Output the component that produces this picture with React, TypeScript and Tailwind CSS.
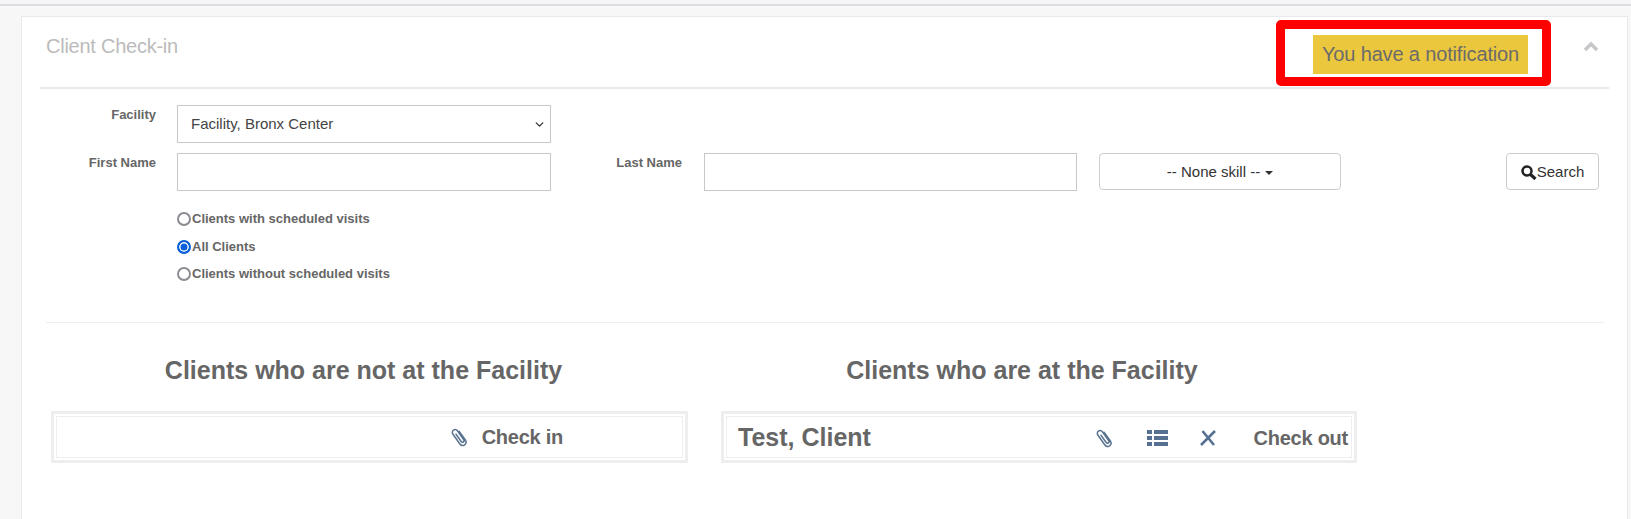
import { ChevronDown } from 'lucide-react';

const sans = 'font-["Liberation_Sans",Arial,sans-serif]';

function ClipIcon() {
    return (
        <svg width="18" height="20" viewBox="0 0 18 20" fill="none" stroke="#5a7391" strokeWidth="1.5" strokeLinecap="round" strokeLinejoin="round">
            <path d="M8.2 4.4l6 8.4c1.3 1.9.9 3.9-.6 5-1.6 1.100-3.600.7-4.900-1.100L2 7.300C.9 5.800 1.200 4 2.500 3.100c1.300-.9 3-.6 4.100.9l6 8.500c.7 1 .5 2-.2 2.500-.8.5-1.700.300-2.400-.7L5 7.300" />
        </svg>
    );
}

function ListIcon() {
    return (
        <svg width="21" height="16" viewBox="0 0 21 16" fill="#567091">
            <rect x="0" y="0" width="5" height="4" />
            <rect x="7" y="0" width="14" height="4" />
            <rect x="0" y="6" width="5" height="4" />
            <rect x="7" y="6" width="14" height="4" />
            <rect x="0" y="12" width="5" height="4" />
            <rect x="7" y="12" width="14" height="4" />
        </svg>
    );
}

function CrossIcon() {
    return (
        <svg width="18" height="16" viewBox="0 0 18 16" stroke="#567091" strokeWidth="2.6" strokeLinecap="butt">
            <path d="M2 15L16 1M3.500 1L15 15" />
        </svg>
    );
}

function SearchIcon() {
    return (
        <svg width="16" height="15" viewBox="0 0 16 15" fill="none" stroke="#222" strokeWidth="2.500">
            <circle cx="6" cy="6" r="4.500" />
            <path d="M9.500 9.500L14.500 14" strokeWidth="3.200" />
        </svg>
    );
}

function Label({ text, className }: { text: string; className: string }) {
    return <label className={`shrink-0 pt-[1px] text-right text-[13px] leading-[18px] font-bold text-[#666] ${className}`}>{text}</label>;
}

function Radio({ text, checked }: { text: string; checked?: boolean }) {
    return (
        <label className="flex h-[18px] items-center text-[13px] font-bold text-[#666]">
            <input
                type="radio"
                name="scope"
                defaultChecked={checked}
                className="m-0 mr-[1px] h-[14px] w-[14px] appearance-none rounded-full border-2 border-[#8b8b93] bg-white checked:border-[#0a5fd8] checked:bg-[#0a5fd8] checked:shadow-[inset_0_0_0_1.5px_white]"
            />
            {text}
        </label>
    );
}

function ClientBox({ children }: { children: React.ReactNode }) {
    return (
        <div className="h-[52px] border-[3px] border-[#eeeeee] p-[2px]">
            <div className="flex h-[42px] items-center border border-[#eeeeee]">{children}</div>
        </div>
    );
}

export default function App() {
    return (
        <div className={`${sans} h-[519px] w-full overflow-hidden bg-[#f7f7f7]`}>
            <div className="h-[6px] border-b-2 border-[#dcdde2] bg-[#f5f5f5]"></div>
            <div className="mt-[10px] ml-[21px] h-[520px] w-[1607px] border border-[#e6e9ed] bg-white pr-[18px] pl-[18px]">
                <div className="flex h-[72px] border-b-2 border-[#e6e9ed]">
                    <h2 className="mt-[19px] ml-[6px] text-[20px] leading-[21px] tracking-[-0.25px] text-[#bbbbbb]">Client Check-in</h2>
                    <div className="mt-[3px] ml-auto flex h-[66px] w-[275px] items-start rounded-[5px] border-[9px] border-[#ff0000] pt-[6px] pl-[28px]">
                        <span className="h-[39px] w-[215px] bg-[#ebc73d] text-center text-[20px] leading-[39px] tracking-[-0.15px] text-[#6b6b6b]">You have a notification</span>
                    </div>
                    <svg className="mt-[24px] mr-[11px] ml-[33px]" width="14" height="11" viewBox="0 0 14 11" fill="none" stroke="#c5c7cb" strokeWidth="3.500">
                        <path d="M1 9l6-6 6 6" />
                    </svg>
                </div>

                <div className="mt-[16px] flex">
                    <Label text="Facility" className="w-[116px]" />
                    <div className="relative ml-[21px] h-[38px] w-[374px]">
                        <select className="h-full w-full appearance-none border border-[#c8c8c8] bg-white pl-[13px] text-[15px] text-[#444]">
                            <option>Facility, Bronx Center</option>
                        </select>
                        <ChevronDown className="pointer-events-none absolute top-[13px] right-[5px] h-[13px] w-[13px] text-[#333]" strokeWidth={2.5} />
                    </div>
                </div>

                <div className="mt-[10px] flex">
                    <Label text="First Name" className="w-[116px]" />
                    <input className="ml-[21px] h-[38px] w-[374px] border border-[#c8c8c8] bg-white" />
                    <Label text="Last Name" className="w-[131px]" />
                    <input className="ml-[22px] h-[38px] w-[373px] border border-[#c8c8c8] bg-white" />
                    <button className="ml-[22px] h-[37px] w-[242px] rounded-[4px] border border-[#cccccc] bg-white pt-[1px] text-[15px] text-[#333]">
                        -- None skill --
                        <span className="ml-[5px] inline-block border-x-[4px] border-t-[4px] border-x-transparent border-t-[#333] align-middle"></span>
                    </button>
                    <button className="ml-[165px] flex h-[37px] w-[93px] items-center justify-center rounded-[4px] border border-[#cccccc] bg-white pt-[1px] text-[15px] text-[#333]">
                        <SearchIcon />
                        Search
                    </button>
                </div>

                <div className="mt-[19px] ml-[137px] flex flex-col gap-[9.5px]">
                    <Radio text="Clients with scheduled visits" />
                    <Radio text="All Clients" checked />
                    <Radio text="Clients without scheduled visits" />
                </div>

                <div className="mt-[39px] ml-[6px] w-[1558px] border-t border-[#eeeeee]"></div>

                <div className="mt-[33px] ml-[11px] flex gap-[33px]">
                    <div className="w-[637px]">
                        <h3 className="h-[28px] pr-[12px] text-center text-[25px] leading-[28px] font-bold text-[#666]">Clients who are not at the Facility</h3>
                        <div className="mt-[27px]">
                            <ClientBox>
                                <div className="ml-auto flex items-center gap-[13px] pr-[119px] text-[20px] font-bold tracking-[-0.25px] text-[#666]">
                                    <ClipIcon />
                                    Check in
                                </div>
                            </ClientBox>
                        </div>
                    </div>
                    <div className="w-[636px]">
                        <h3 className="h-[28px] pr-[34px] text-center text-[25px] leading-[28px] font-bold text-[#666]">Clients who are at the Facility</h3>
                        <div className="mt-[27px]">
                            <ClientBox>
                                <span className="pt-[1px] pl-[11px] text-[25px] font-bold text-[#666]">Test, Client</span>
                                <div className="ml-auto flex items-center pt-[1px] pr-[3px] text-[20px] font-bold tracking-[-0.25px] text-[#666]">
                                    <ClipIcon />
                                    <span className="ml-[33px]"><ListIcon /></span>
                                    <span className="ml-[31px]"><CrossIcon /></span>
                                    <span className="ml-[37px]">Check out</span>
                                </div>
                            </ClientBox>
                        </div>
                    </div>
                </div>
            </div>
        </div>
    );
}
